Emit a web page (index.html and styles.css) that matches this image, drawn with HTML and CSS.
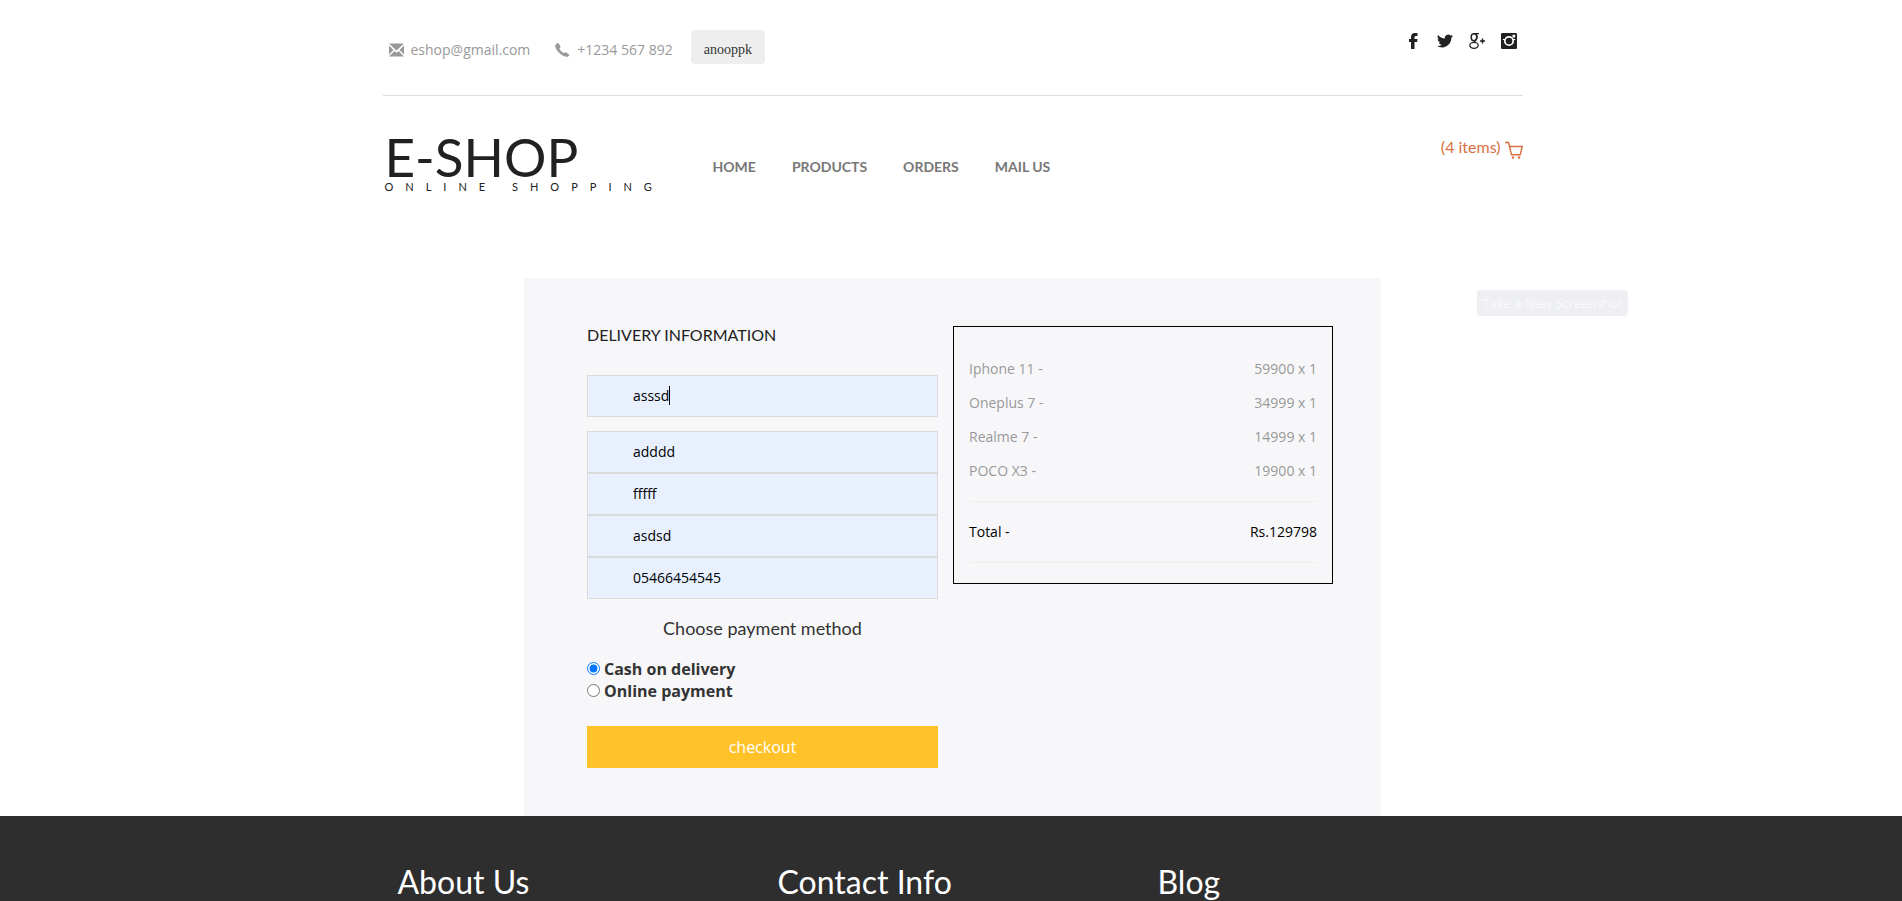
FILE: index.html
```html
<!DOCTYPE html>
<html lang="en">
<head>
<meta charset="utf-8">
<title>E-Shop</title>
<link rel="stylesheet" href="styles.css">
</head>
<body>
<header class="container">
  <div class="topbar">
    <ul class="contact">
      <li><svg class="glyph" viewBox="0 0 15 13"><path d="M0 0h15L7.500 7zM0 2l4.500 4.500L0 11zM15 2v9l-4.500-4.500zM0 13l5.500-5.500 2 1.700 2-1.700L15 13z"/></svg><a href="#">eshop@gmail.com</a></li>
      <li><svg class="glyph" viewBox="0 0 14 14"><path d="M.6 1.200Q2.300-.9 3.600 1L5 3.400Q5.300 4.600 3.800 5.600 5 8.800 8.400 10.300 9.500 8.800 10.600 9.400L13.400 11.200Q14.300 12 12.700 13.500 10 14.700 5.200 11.300-.3 6.500-.3 3-.2 1.900.6 1.200z"/></svg><span>+1234 567 892</span></li>
      <li><button class="user" type="button">anooppk</button></li>
    </ul>
    <div class="social">
      <a href="#" aria-label="Facebook"><svg width="16" height="16" viewBox="0 0 16 16"><path d="M6 16V9H4V6h2V4.300Q6 0 10 0h2.500v3H11Q9.500 3 9.500 4.300V6h3l-.4 3H9.500v7z"/></svg></a>
      <a href="#" aria-label="Twitter"><svg width="16" height="16" viewBox="0 0 24 24"><path d="M24 4.600c-.9.400-1.800.7-2.800.8 1-.6 1.800-1.600 2.200-2.700-1 .6-2 1-3.100 1.200A4.900 4.900 0 0 0 11.900 8.400C7.800 8.200 4.100 6.200 1.700 3.100a4.900 4.900 0 0 0 1.500 6.600c-.8 0-1.600-.2-2.200-.6v.1a4.900 4.900 0 0 0 3.900 4.800c-.7.200-1.500.2-2.200.1a4.900 4.900 0 0 0 4.600 3.400A9.900 9.900 0 0 1 0 19.500 13.900 13.900 0 0 0 7.500 21.700c9.100 0 14.300-7.700 14-14.600 1-.7 1.800-1.600 2.500-2.500z"/></svg></a>
      <a href="#" aria-label="Google Plus"><svg width="16" height="16" viewBox="0 0 16 16" fill="none" stroke="currentColor"><ellipse cx="5" cy="4.200" rx="2.800" ry="3.500" stroke-width="1.500"/><path d="M5 .7h5M7 1.200q2.200 3-.2 5.500-2.600 1.500.2 2.900" stroke-width="1.300"/><ellipse cx="5" cy="12.300" rx="4.200" ry="3" stroke-width="1.300"/><path d="M13.500 5.500v5M11 8h5" stroke-width="1.500"/></svg></a>
      <a href="#" aria-label="Instagram"><svg width="16" height="16" viewBox="0 0 16 16"><rect width="16" height="16" rx="1.300"/><path d="M11.500 1.800h2.700v2.700h-2.700z" fill="#fff"/><circle cx="8" cy="8" r="4.200" fill="none" stroke="#fff" stroke-width="1.700"/><path d="M1.800 6.500h2M12 6.500h2.200" stroke="#fff" stroke-width="1"/></svg></a>
    </div>
  </div>
  <div class="masthead">
    <a class="logo" href="#"><span class="logo-name">E-SHOP</span><span class="logo-tag">ONLINE SHOPPING</span></a>
    <nav class="nav">
      <a href="#">HOME</a>
      <a href="#">PRODUCTS</a>
      <a href="#">ORDERS</a>
      <a href="#">MAIL US</a>
    </nav>
    <a class="cart" href="#"><span>(4 items)</span><svg width="18" height="18" viewBox="0 0 18 18" fill="none" stroke="currentColor" stroke-width="1.400"><path d="M0 1.500h3.500l3 12.200h8.700l2-8.200H4.700"/><circle cx="8" cy="16.500" r="1.200" fill="currentColor" stroke="none"/><circle cx="14" cy="16.500" r="1.200" fill="currentColor" stroke="none"/></svg></a>
  </div>
</header>
<main class="container">
  <form class="checkout">
    <section class="delivery">
      <h1>DELIVERY INFORMATION</h1>
      <div class="fields">
        <div class="field focused"><input type="text" aria-label="Name" value="asssd"></div>
        <input type="text" aria-label="Address" value="adddd">
        <input type="text" aria-label="City" value="fffff">
        <input type="text" aria-label="State" value="asdsd">
        <input type="text" aria-label="Phone" value="05466454545">
      </div>
      <h2>Choose payment method</h2>
      <label class="option"><input type="radio" name="payment" checked>Cash on delivery</label>
      <label class="option"><input type="radio" name="payment">Online payment</label>
      <button class="submit" type="button">checkout</button>
    </section>
    <section class="summary">
      <dl>
        <div><dt>Iphone 11 -</dt><dd>59900 x 1</dd></div>
        <div><dt>Oneplus 7 -</dt><dd>34999 x 1</dd></div>
        <div><dt>Realme 7 -</dt><dd>14999 x 1</dd></div>
        <div><dt>POCO X3 -</dt><dd>19900 x 1</dd></div>
        <div class="total"><dt>Total -</dt><dd>Rs.129798</dd></div>
      </dl>
    </section>
  </form>
</main>
<footer class="footer">
  <div class="container footer-columns">
    <h3>About Us</h3>
    <h3>Contact Info</h3>
    <h3>Blog</h3>
  </div>
</footer>
<button class="capture" type="button">Take a New Screenshot</button>
</body>
</html>
```
FILE: styles.css
```css
* { box-sizing: border-box; }
html { background: #fff; }
body {
  margin: 0;
  min-height: 100vh;
  overflow-x: hidden;
  display: flex;
  flex-direction: column;
  font-family: "Open Sans", sans-serif;
  font-size: 14px;
  line-height: 20px;
  color: #333;
}
h1, h2, h3, ul, dl, dd { margin: 0; padding: 0; font-weight: 400; }
a { color: inherit; text-decoration: none; }
button { border: 0; font: inherit; cursor: pointer; }
.container { width: 100%; max-width: 1143px; margin: 0 auto; padding-left: 3px; }

.topbar {
  display: flex;
  justify-content: space-between;
  align-items: flex-start;
  height: 96px;
  padding: 30px 6px 0 6px;
  border-bottom: 1px solid #ddd;
}
.contact { display: flex; align-items: flex-end; list-style: none; color: #999; }
.contact li { display: flex; align-items: center; margin-right: 25px; padding-bottom: 4px; }
.contact li:nth-child(2) { margin-right: 18px; }
.contact li:last-child { padding-bottom: 0; }
.glyph { width: 15px; height: 14px; margin-right: 7px; fill: #999; }
.user {
  height: 34px;
  padding: 5px 13px 0;
  border-radius: 4px;
  background: #eee;
  color: #333;
  font-family: "Liberation Serif", serif;
}
.social { display: flex; gap: 16px; padding-top: 3px; color: #212121; }
.social svg, .cart svg { display: block; }
.social svg:not([fill]) { fill: currentColor; }

.masthead { display: flex; align-items: flex-start; padding: 37px 0 0 2px; height: 182px; }
.logo { display: flex; flex-direction: column; width: 328px; color: #212121; font-family: Lato, sans-serif; }
.logo-name { font-size: 53px; line-height: 48px; }
.logo-tag { font-size: 11px; line-height: 12px; letter-spacing: 12px; white-space: nowrap; }
.nav { display: flex; gap: 36px; padding-top: 24px; color: #777; font: 700 14px/20px Lato, sans-serif; }
.cart { display: flex; gap: 4px; margin-left: auto; padding-top: 4px; color: #d8703f; font: 16px/20px Lato, sans-serif; }
.cart svg { margin-top: 4px; }

.checkout {
  display: grid;
  grid-template-columns: 351px 380px;
  gap: 15px;
  align-items: start;
  max-width: 857px;
  margin: 0 auto;
  padding: 48px 48px 48px 63px;
  background: #f7f7f9;
}
h1 { font: 16px/18px Lato, sans-serif; color: #212121; }
.fields { display: flex; flex-direction: column; margin-top: 31px; }
.field { position: relative; margin-bottom: 14px; }
.fields input {
  display: block;
  width: 100%;
  height: 42px;
  padding: 0 45px 2px;
  border: 1px solid #dbdbdb;
  border-radius: 0;
  outline: 0;
  background: #e8f0fe;
  color: #000;
  font: 14px/20px "Open Sans", sans-serif;
}
.focused::after { content: ""; position: absolute; left: 82px; top: 11px; width: 1px; height: 19px; background: #000; }
h2 { margin: 19px 0 20px; text-align: center; font: 18px/20px Lato, sans-serif; }
.option { display: flex; align-items: center; gap: 4px; font-size: 16px; line-height: 22px; font-weight: 700; }
.option input { width: 13px; height: 13px; margin: 0 0 2px; }
.submit { display: block; width: 100%; height: 42px; margin-top: 24px; background: #ffc229; color: #fff; font-size: 16px; }

.summary { padding: 25px 15px 20px; border: 1px solid #000; color: #999; }
.summary dl div { display: flex; justify-content: space-between; padding: 7px 0; }
.summary .total { margin-top: 13px; padding: 20px 0; border: solid #eee; border-width: 1px 0; color: #000; }

.footer { flex: 1; background: #2e2e2e; color: #fff; }
.footer-columns { display: grid; grid-template-columns: repeat(3, 1fr); padding-top: 46px; }
h3 { padding-left: 15px; font: 32px/40px Lato, sans-serif; }

.capture {
  position: absolute;
  left: 1477px;
  top: 290px;
  height: 26px;
  padding: 0 5px;
  border-radius: 4px;
  background: #eeeff2;
  color: #fafafa;
  font-size: 13px;
  white-space: nowrap;
}
```
